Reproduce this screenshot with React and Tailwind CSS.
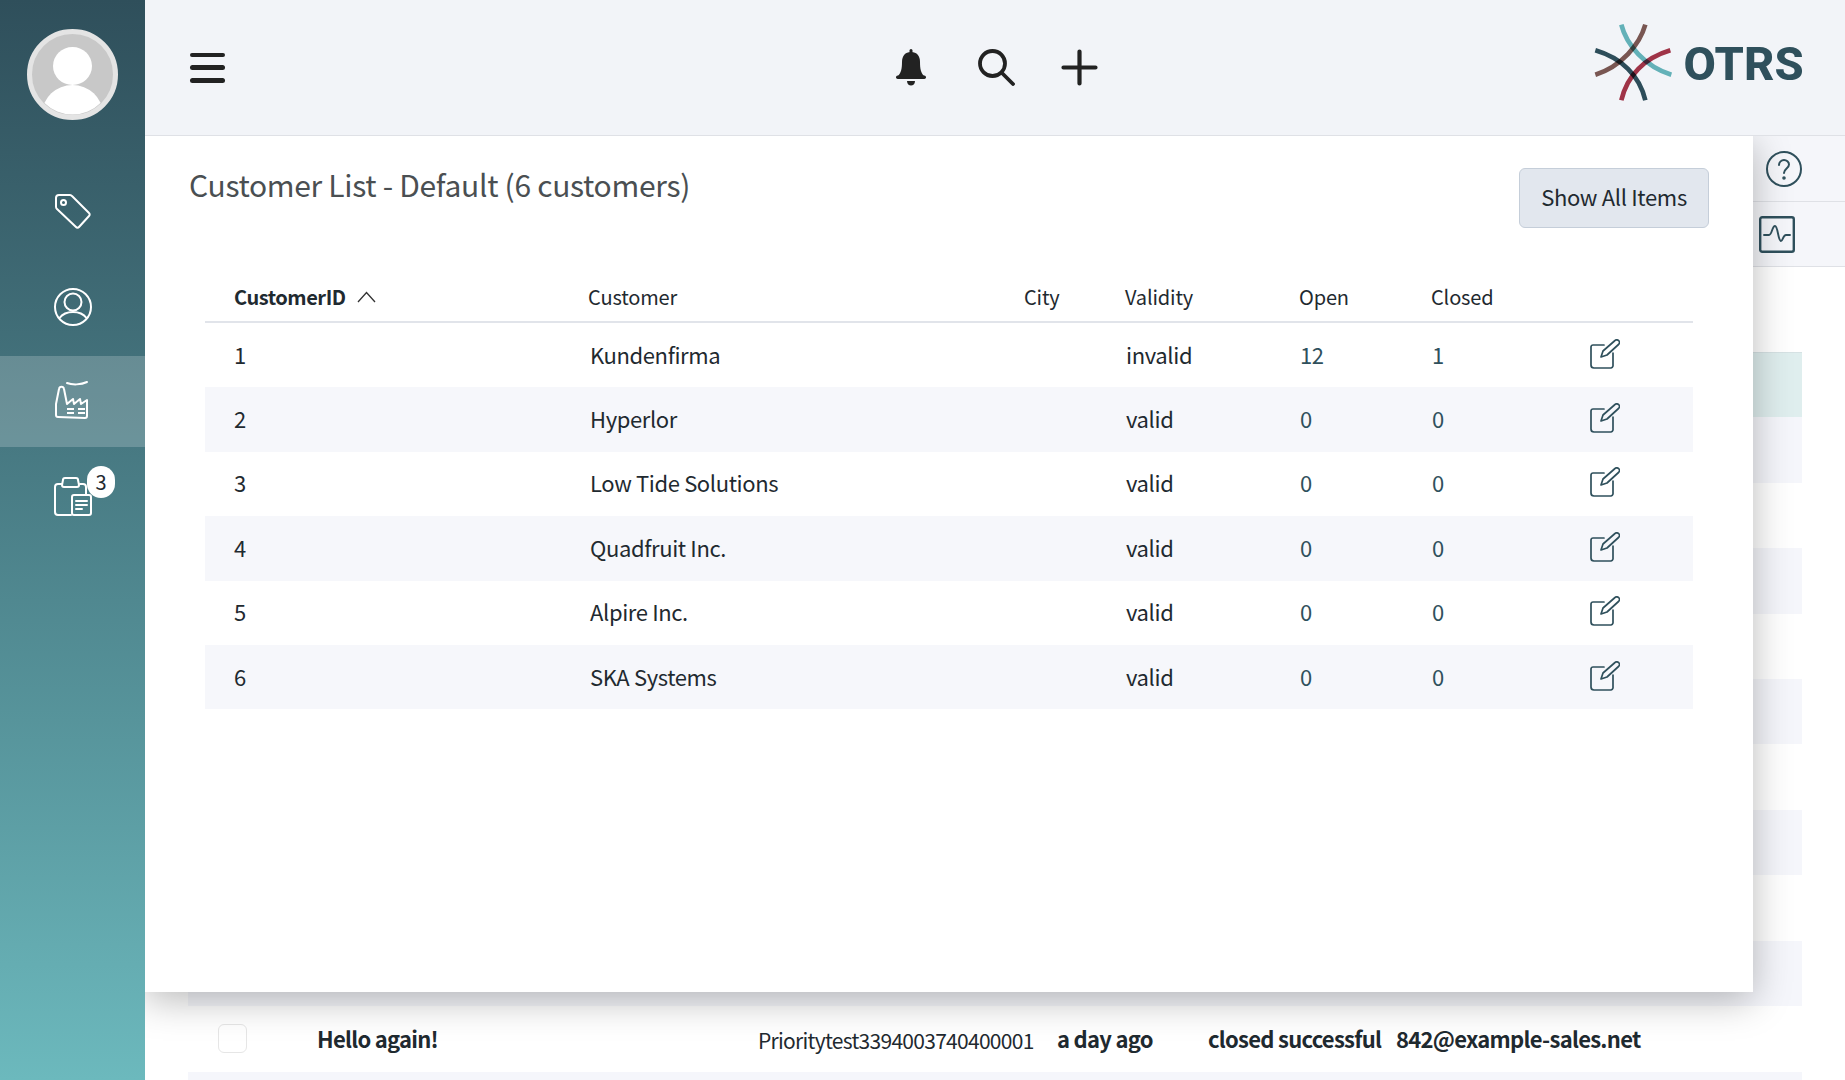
import React from "react";

const customers = [
  ["1", "Kundenfirma", "invalid", "12", "1"],
  ["2", "Hyperlor", "valid", "0", "0"],
  ["3", "Low Tide Solutions", "valid", "0", "0"],
  ["4", "Quadfruit Inc.", "valid", "0", "0"],
  ["5", "Alpire Inc.", "valid", "0", "0"],
  ["6", "SKA Systems", "valid", "0", "0"],
];
const bgRows = ["bg-[#dfeeee] border-t border-[#d6e2e4]", "bg-[#f5f6fb]", "bg-white", "bg-[#f5f6fb]", "bg-white", "bg-[#f5f6fb]", "bg-white", "bg-[#f5f6fb]", "bg-white", "bg-[#f5f6fb]"];

const cols = "grid grid-cols-[29px_356px_434px_102px_174px_132px_158px_103px]";

function Avatar() {
  return (
    <svg width="91" height="91" viewBox="0 0 91 91" className="block">
      <defs><clipPath id="av"><circle cx="45.5" cy="45.5" r="40" /></clipPath></defs>
      <circle cx="45.5" cy="45.5" r="43" fill="#c8c8c8" stroke="#e4e4e4" strokeWidth="5" />
      <g clipPath="url(#av)" fill="#fff">
        <ellipse cx="45.5" cy="37" rx="19.5" ry="19" />
        <ellipse cx="45.5" cy="84" rx="30" ry="28" />
      </g>
    </svg>
  );
}
function Tag() {
  return (
    <svg width="40" height="40" viewBox="0 0 40 40" fill="none" stroke="#fff" strokeWidth="2" strokeLinejoin="round" className="mt-[3px]">
      <path d="M3 6a3 3 0 0 1 3-3h11a3 3 0 0 1 2 1l17 17a2 2 0 0 1 0 3L26 35a2 2 0 0 1-3 0L4 17a3 3 0 0 1-1-2z" />
      <circle cx="10.5" cy="10.5" r="2.5" />
    </svg>
  );
}
function UserIcon() {
  return (
    <svg width="40" height="40" viewBox="0 0 40 40" fill="none" stroke="#fff" strokeWidth="2" className="mt-[2px]">
      <circle cx="20" cy="20" r="18" />
      <circle cx="20" cy="15" r="8.5" />
      <path d="M6.5 31c3-4 8-6 13.500-6s10.500 2 13.500 6" />
    </svg>
  );
}
function Factory() {
  return (
    <svg width="40" height="40" viewBox="0 0 40 40" fill="none" stroke="#fff" strokeWidth="2" strokeLinejoin="round" strokeLinecap="round" className="-mt-[3px]">
      <path d="M5 37c-1 0-2-1-2-2V24L6 9c.5-3 4.500-3 5 0l3 15 6-5 1 5 6-5 1 5 6-4v16c0 1-1 2-2 2z" />
      <path d="M14 3c5 2 14 2 20-1" />
      <path d="M14 29h7M25 29h7M14 33h7M25 33h7" strokeWidth="1.800" strokeLinecap="butt" />
    </svg>
  );
}
function Clipboard() {
  return (
    <svg width="40" height="40" viewBox="0 0 40 40" fill="none" stroke="#fff" strokeWidth="2" strokeLinejoin="round" strokeLinecap="round">
      <path d="M9 7H5a3 3 0 0 0-3 3v25a3 3 0 0 0 3 3h13" />
      <path d="M27 7h3a3 3 0 0 1 3 3v7" />
      <path d="M10 3c0-1 1-2 2-2h11c1 0 2 1 2 2l1 5a2 2 0 0 1-2 2H11a2 2 0 0 1-2-2z" />
      <rect x="19" y="18" width="19" height="20" rx="2" />
      <path d="M23 24h11M23 28h11M23 32h6" />
    </svg>
  );
}
function Bell() {
  return (
    <svg width="30" height="37" viewBox="0 0 30 37" fill="#222">
      <rect x="13.500" y="0" width="3" height="5" rx="1.500" />
      <path d="M15 3c-6 0-9 4-9 10 0 7-1 11-4 14h26c-3-3-4-7-4-14 0-6-3-10-9-10z" />
      <rect x="0" y="26.500" width="30" height="3.500" rx="1.700" />
      <path d="M11 32h8c0 3-2 4.500-4 4.500s-4-1.500-4-4.500z" />
    </svg>
  );
}
function Search() {
  return (
    <svg width="37" height="37" viewBox="0 0 37 37" fill="none" stroke="#222" strokeWidth="3.800" strokeLinecap="round" className="block">
      <circle cx="14.500" cy="14.500" r="12.500" />
      <path d="M24 24l11 11" />
    </svg>
  );
}
function Plus() {
  return (
    <svg width="37" height="37" viewBox="0 0 37 37" fill="none" stroke="#222" strokeWidth="4.200" strokeLinecap="round" className="block">
      <path d="M18.500 2.500v32M2.500 18.500h32" />
    </svg>
  );
}
function Logo() {
  return (
    <svg width="80" height="80" viewBox="40 40 240 240" fill="none" strokeWidth="14" className="block">
      <path d="M125 45C140 105 195 170 275 195" stroke="#68b9bd" className="mix-blend-multiply" />
      <path d="M197 45C180 105 125 170 47 195" stroke="#7f5a54" className="mix-blend-multiply" />
      <path d="M47 122C125 145 180 197 197 272" stroke="#2f505c" className="mix-blend-multiply" />
      <path d="M272 122C195 145 142 197 125 272" stroke="#a83549" className="mix-blend-multiply" />
    </svg>
  );
}
function Edit() {
  return (
    <svg width="30" height="30" viewBox="0 0 30 30" fill="none" stroke="#2f505c" strokeWidth="1.700" strokeLinejoin="round" strokeLinecap="round" className="block">
      <path d="M14 6H3a2 2 0 0 0-2 2v18a3 3 0 0 0 3 3h17a3 3 0 0 0 2-2V14" />
      <path d="M11 18l2-6L25 1.500c1-1 3-1 4 .500 1 1 .5 2.500-.5 3.500L17 16z" />
    </svg>
  );
}

function NavItem({ children, active }) {
  return (
    <div className={`relative h-[91px] flex items-center justify-center ${active ? "bg-[#ffffff33]" : ""}`}>
      {children}
    </div>
  );
}

export default function App() {
  return (
    <div className="flex h-screen w-full overflow-hidden bg-white text-[#1f2a30] font-['Noto_Sans_CJK_SC',sans-serif]">
      <aside className="relative z-30 w-[145px] shrink-0 bg-gradient-to-b from-[#2f4f5b] to-[#6cb9bd]">
        <div className="flex justify-center pt-[29px] pb-[45px]"><Avatar /></div>
        <div className="flex flex-col gap-[4.500px]">
          <NavItem><Tag /></NavItem>
          <NavItem><UserIcon /></NavItem>
          <NavItem active><Factory /></NavItem>
          <NavItem>
            <Clipboard />
            <span className="absolute left-[87px] top-[14px] flex h-[32px] w-[28px] items-center justify-center rounded-full bg-white text-[20px] leading-none text-[#1f2a30]">3</span>
          </NavItem>
        </div>
      </aside>

      <main className="relative flex min-w-0 flex-1 flex-col">
        <header className="relative z-30 flex h-[136px] shrink-0 items-center border-b border-[#dfe1e6] bg-[#f2f4f8]">
          <div className="ml-[44.500px] flex h-[30px] w-[35.500px] flex-col justify-between">
            <span className="h-[4.500px] rounded-full bg-[#222]" />
            <span className="h-[4.500px] rounded-full bg-[#222]" />
            <span className="h-[4.500px] rounded-full bg-[#222]" />
          </div>
          <div className="ml-[671px] flex items-center">
            <Bell />
            <span className="ml-[52px]"><Search /></span>
            <span className="ml-[46px]"><Plus /></span>
          </div>
          <div className="mb-[9px] ml-auto mr-[41px] flex items-center gap-[11px]">
            <Logo />
            <span className="font-['Roboto'] text-[47px] font-extrabold leading-none tracking-[0.2px] text-[#2f505c]">OTRS</span>
          </div>
        </header>

        <div className="relative flex-1">
          <div className="ml-auto w-[92px] bg-[#f5f6fa]">
            <div className="flex h-[66px] items-center border-b border-[#dfe1e6] pl-[13px]">
              <svg width="36" height="38" viewBox="0 0 36 38" fill="none" stroke="#2f505c" strokeWidth="2" strokeLinecap="round">
                <circle cx="18" cy="19" r="17" />
                <path d="M13 15c0-3 2.500-5 5-5s5 2 5 4.500c0 4-5 4-5 8.500" />
                <circle cx="18" cy="28" r="0.800" fill="#2f505c" />
              </svg>
            </div>
            <div className="flex h-[65px] items-center border-b border-[#dfe1e6] pl-[6px]">
              <svg width="36" height="37" viewBox="0 0 36 37" fill="none" stroke="#2f505c" strokeWidth="2.400" strokeLinecap="round" strokeLinejoin="round">
                <rect x="1.200" y="1.200" width="33.600" height="34.600" rx="2" />
                <path d="M5 19h5c3 0 3-9 6-9s3 15 6 15c2 0 2-6 5-6h4" strokeWidth="1.900" />
              </svg>
            </div>
          </div>

          <div className="ml-[43px] mt-[85px] w-[1614px]">
            {bgRows.map((c, i) => <div key={i} className={`h-[65.400px] ${c}`} />)}
            <div className="flex h-[66px] items-center whitespace-nowrap bg-white text-[22px] font-semibold tracking-[-0.72px]">
              <span className="ml-[30px] h-[29px] w-[29px] rounded-[6px] border border-[#e6e6e6]" />
              <span className="ml-[70px] w-[441px]">Hello again!</span>
              <span className="mt-[3px] w-[299px] text-[21px] font-normal tracking-[-0.72px]">Prioritytest3394003740400001</span>
              <span className="w-[151px]">a day ago</span>
              <span className="w-[188px]">closed successful</span>
              <span>842@example-sales.net</span>
            </div>
            <div className="h-[20px] bg-[#f5f6fb]" />
          </div>

          <section className="absolute left-0 top-0 z-20 h-[856px] w-[1608px] bg-white shadow-[0_8px_36px_rgba(0,0,0,0.28)]">
            <div className="flex items-start justify-between px-[44px] pt-[32px]">
              <h1 className="-mt-[4px] text-[30px] leading-[40px] tracking-[-0.32px] text-[#4a4f52]">Customer List - Default (6 customers)</h1>
              <button className="h-[60px] w-[190px] rounded-[6px] border border-[#c5ced9] bg-[#e2e7ee] pb-[3px] text-[22px] tracking-[-0.33px] text-[#1f2a30]">Show All Items</button>
            </div>
            <div className="mx-[60px] mt-[42px]">
              <div className={`${cols} h-[53px] items-center border-b-2 border-[#e1e4ea] pt-[3px] text-[20px] tracking-[-0.15px]`}>
                <span />
                <span className="flex items-center gap-[11px] font-semibold tracking-[-0.45px]">
                  CustomerID
                  <svg width="19" height="12" viewBox="0 0 19 12" fill="none" stroke="#333" strokeWidth="1.300"><path d="M1 11L9.500 1.500 18 11" /></svg>
                </span>
                <span className="-ml-[2px]">Customer</span>
                <span>City</span>
                <span className="-ml-[1px]">Validity</span>
                <span className="-ml-[1px]">Open</span>
                <span className="-ml-[1px]">Closed</span>
                <span />
              </div>
              {customers.map((r, i) => (
                <div key={r[0]} className={`${cols} h-[64.400px] items-center text-[22px] tracking-[-0.37px] ${i % 2 ? "bg-[#f6f7fb]" : ""}`}>
                  <span />
                  <span className="pb-[2px]">{r[0]}</span>
                  <span className="pb-[2px]">{r[1]}</span>
                  <span />
                  <span className="pb-[2px]">{r[2]}</span>
                  <span className="pb-[2px] text-[#2f505c]">{r[3]}</span>
                  <span className="pb-[2px] text-[#2f505c]">{r[4]}</span>
                  <span className="-mt-[3px]"><Edit /></span>
                </div>
              ))}
            </div>
          </section>
        </div>
      </main>
    </div>
  );
}
